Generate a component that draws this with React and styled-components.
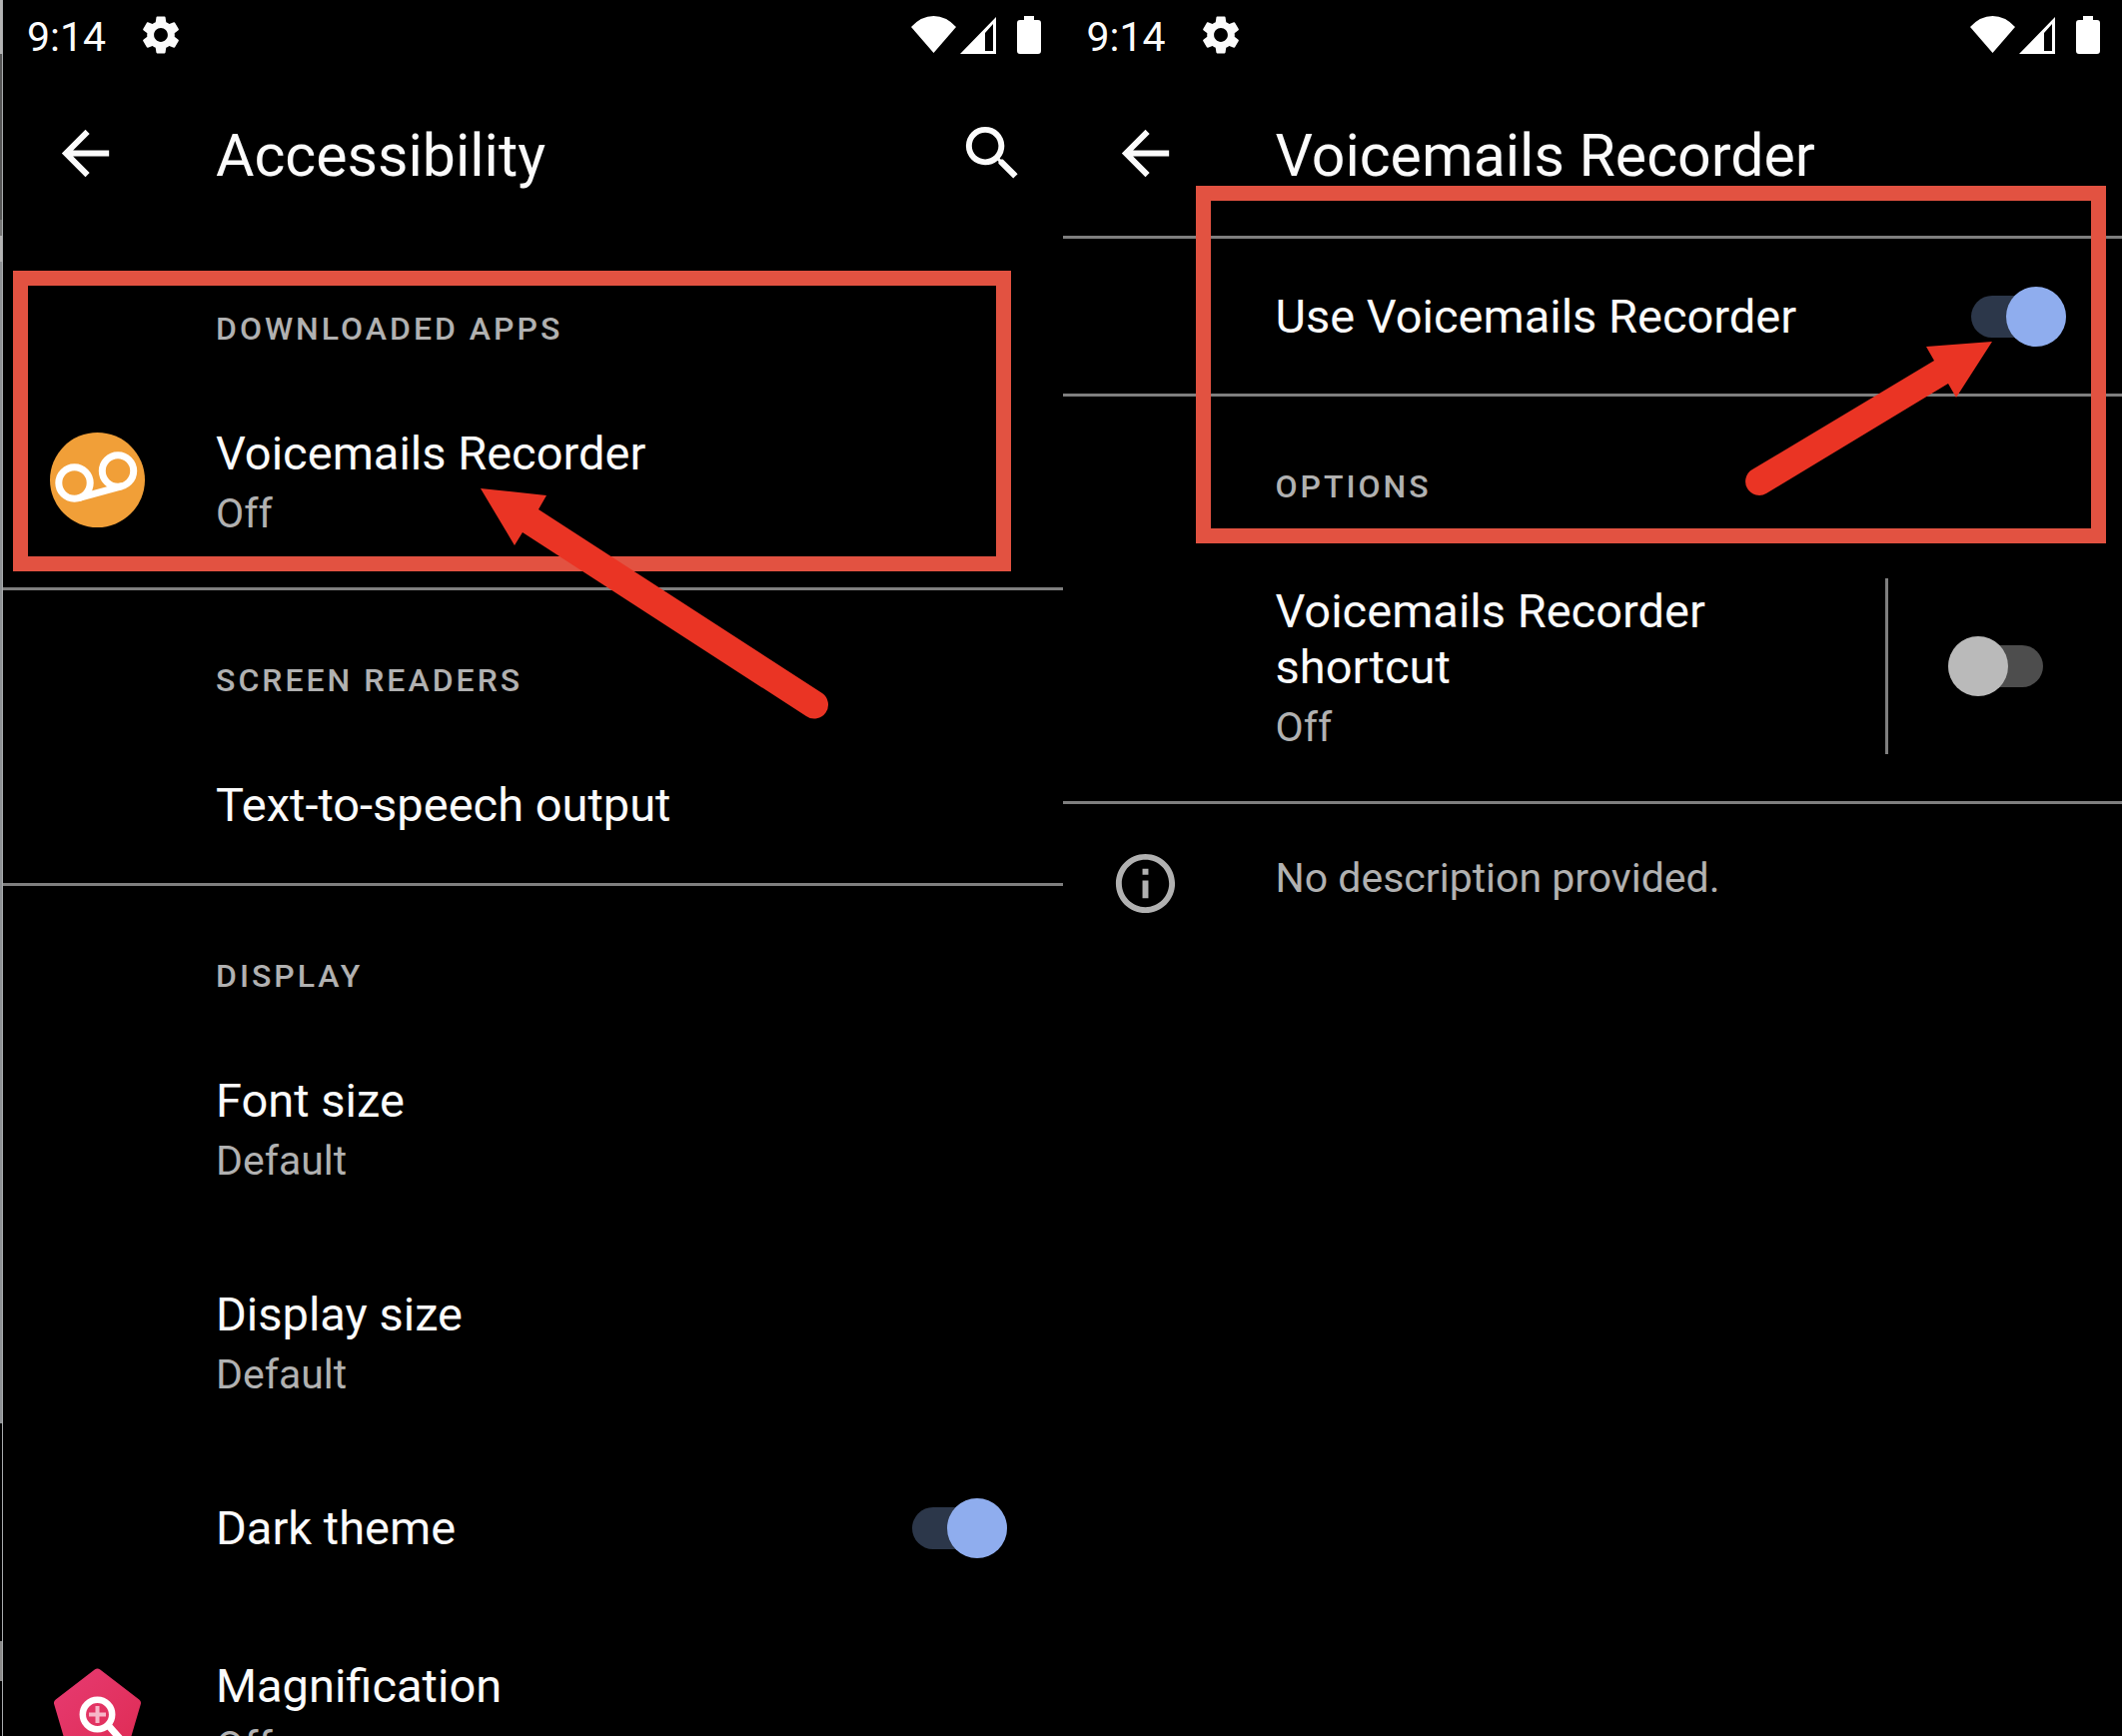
import React from "react";
import styled, { createGlobalStyle, css } from "styled-components";

const color = {
  text: "#fbfbfb",
  muted: "#b1b1b1",
  line: "#7f7f7f",
  frame: "#e25241",
  arrow: "#ea3424",
};

const GlobalStyle = createGlobalStyle`
  * { box-sizing: border-box; }
  body {
    margin: 0;
    background: #000;
    color: ${color.text};
    font-family: Roboto, "Liberation Sans", sans-serif;
  }
`;

/* ---------- layout ---------- */

const Page = styled.main`
  display: grid;
  grid-template-columns: 3px 1fr 1fr;
  height: 100vh;
  overflow: hidden;
`;

const Edge = styled.div`
  border-right: 1px solid #a9acae;
  background: linear-gradient(
    #b4b4b4 0 54px,
    #555 54px 220px,
    #777 220px 236px,
    #b4b4b4 236px 262px,
    #8f9295 262px 1425px,
    #000 1425px 1643px,
    #8a8a8a 1643px 1683px,
    #000 1683px
  );
`;

const Screen = styled.section`
  position: relative;
  display: flex;
  flex-direction: column;
  min-width: 0;
  overflow: hidden;
`;

const StatusBar = styled.div`
  display: flex;
  align-items: center;
  flex: none;
  height: 70px;
  padding: 0 22px 0 24px;
`;

const Clock = styled.time`
  padding-top: 4px;
  margin-right: 32px;
  font-size: 41px;
  line-height: 48px;
`;

const StatusIcons = styled.div`
  display: flex;
  align-items: center;
  margin-left: auto;
`;

const Toolbar = styled.header`
  display: flex;
  align-items: center;
  flex: none;
  height: 166px;
  padding: 0 35px 0 47px;
`;

const Title = styled.h1`
  flex: 1;
  margin: 0;
  padding: 6px 0 0 95px;
  font-size: 59px;
  font-weight: 400;
  line-height: 70px;
`;

const IconButton = styled.button`
  display: flex;
  flex: none;
  padding: 0;
  border: 0;
  background: none;
  color: inherit;
  cursor: pointer;
`;

const Divider = styled.hr`
  flex: none;
  width: 100%;
  height: 3px;
  margin: 0;
  border: 0;
  background: ${(p) => (p.$hidden ? "transparent" : color.line)};
`;

const Category = styled.h2`
  flex: none;
  margin: 0;
  padding: 71px 0 26px 213px;
  color: ${color.muted};
  font-size: 32px;
  font-weight: 500;
  line-height: 38px;
  letter-spacing: 3px;
  text-transform: uppercase;
`;

const rowStyle = css`
  display: flex;
  align-items: center;
  flex: none;
  width: 100%;
  padding: ${(p) => (p.$tight ? "50px 0 49px" : "52px 0 50px")};
  border: 0;
  background: none;
  color: inherit;
  font: inherit;
  text-align: left;
  cursor: pointer;
`;

const RowButton = styled.button`
  ${rowStyle}
`;

const RowLabel = styled.label`
  ${rowStyle}
  padding-right: 56px;
`;

const SplitRow = styled.div`
  display: flex;
  align-items: center;
  flex: none;
`;

const SplitMain = styled.div`
  flex: 1;
  min-width: 0;
`;

const SplitSide = styled.div`
  display: flex;
  align-items: center;
  flex: none;
  height: 176px;
  padding: 0 79px 0 60px;
  border-left: 3px solid ${color.line};
`;

const Lead = styled.span`
  display: flex;
  flex: none;
  width: 213px;
  padding: 0 0 4px 47px;
`;

const Lines = styled.span`
  display: grid;
  flex: 1;
  gap: 8px;
  padding-right: 24px;
`;

const ItemTitle = styled.span`
  font-size: 47px;
  line-height: 56px;
`;

const Summary = styled.span`
  color: ${color.muted};
  font-size: 41px;
  line-height: 48px;
`;

const Footer = styled.footer`
  display: flex;
  align-items: flex-start;
  padding-top: 44px;
  color: ${color.muted};
`;

const FooterText = styled.p`
  margin: 0;
  padding-top: 6px;
  font-size: 41px;
  line-height: 48px;
`;

const Switch = styled.input.attrs({ type: "checkbox", role: "switch" })`
  position: relative;
  flex: none;
  width: 95px;
  height: 60px;
  margin: -2px 0;
  appearance: none;
  cursor: pointer;

  &::before,
  &::after {
    content: "";
    position: absolute;
  }
  &::before {
    inset: 9px 0;
    border-radius: 21px;
    background: #4d4d4d;
  }
  &::after {
    top: 0;
    left: 0;
    width: 60px;
    height: 60px;
    border-radius: 50%;
    background: #bababa;
  }
  &:checked::before {
    background: #2c374a;
  }
  &:checked::after {
    left: 35px;
    background: #8fadee;
  }
`;

/* ---------- annotations drawn over the screens ---------- */

const Frame = styled.div`
  position: absolute;
  top: ${(p) => p.$top}px;
  left: ${(p) => p.$left}px;
  right: ${(p) => p.$right}px;
  height: ${(p) => p.$height}px;
  border: 15px solid ${color.frame};
  pointer-events: none;
`;

const Arrow = styled.svg`
  position: absolute;
  top: ${(p) => p.$top}px;
  ${(p) => (p.$right === undefined ? `left: ${p.$left}px;` : `right: ${p.$right}px;`)}
  fill: ${color.arrow};
  pointer-events: none;
`;

/* ---------- icons ---------- */

const Glyph = ({ d, size = 71 }) => (
  <svg width={size} height={size} viewBox="0 0 24 24" fill="currentColor" aria-hidden="true">
    <path d={d} />
  </svg>
);

const BACK = "M20 11H7.83l5.59-5.59L12 4l-8 8 8 8 1.41-1.41L7.83 13H20v-2z";
const SEARCH =
  "M15.5 14h-.79l-.28-.27A6.471 6.471 0 0 0 16 9.5 6.5 6.5 0 1 0 9.5 16c1.61 0 3.09-.59 4.23-1.57l.27.28v.79l5 4.99L20.49 19l-4.99-5zm-6 0C7.01 14 5 11.99 5 9.5S7.01 5 9.5 5 14 7.01 14 9.5 11.99 14 9.5 14z";
const GEAR =
  "M19.14 12.94c.04-.3.06-.61.06-.94 0-.32-.02-.64-.07-.94l2.03-1.58a.49.49 0 0 0 .12-.61l-1.92-3.32a.488.488 0 0 0-.59-.22l-2.39.96c-.5-.38-1.03-.7-1.62-.94l-.36-2.54a.484.484 0 0 0-.48-.41h-3.84c-.24 0-.43.17-.47.41l-.36 2.54c-.59.24-1.13.57-1.62.94l-2.39-.96c-.22-.08-.47 0-.59.22L2.74 8.87c-.12.21-.08.47.12.61l2.03 1.58c-.05.3-.09.63-.09.94s.02.64.07.94l-2.03 1.58a.49.49 0 0 0-.12.61l1.92 3.32c.12.22.37.29.59.22l2.39-.96c.5.38 1.03.7 1.62.94l.36 2.54c.05.24.24.41.48.41h3.84c.24 0 .44-.17.47-.41l.36-2.54c.59-.24 1.13-.56 1.62-.94l2.39.96c.22.08.47 0 .59-.22l1.92-3.32c.12-.22.07-.47-.12-.61l-2.01-1.58zM12 15.6c-1.98 0-3.6-1.62-3.6-3.6s1.62-3.6 3.6-3.6 3.6 1.62 3.6 3.6-1.62 3.6-3.6 3.6z";
const INFO =
  "M11 7h2v2h-2V7zm0 4h2v6h-2v-6zm1-9C6.48 2 2 6.48 2 12s4.48 10 10 10 10-4.48 10-10S17.52 2 12 2zm0 18c-4.41 0-8-3.59-8-8s3.59-8 8-8 8 3.59 8 8-3.59 8-8 8z";

const SystemIcons = () => (
  <StatusIcons>
    <svg width="45" height="40" viewBox="0 0 45 40" fill="#fff" aria-label="Wi-Fi">
      <path d="M0 12Q10 1 22.500 1T45 12L22.500 38Z" />
    </svg>
    <svg width="61" height="40" viewBox="0 0 61 40" fill="#fff" aria-label="Signal">
      <path fillRule="evenodd" d="M4 39L40 2V39ZM29 36H37V9L29 18Z" />
    </svg>
    <svg width="24" height="40" viewBox="0 0 24 40" fill="#fff" aria-label="Battery">
      <path d="M7 1H17V5H21Q24 5 24 8V36Q24 39 21 39H3Q0 39 0 36V8Q0 5 3 5H7Z" />
    </svg>
  </StatusIcons>
);

const VoicemailIcon = () => (
  <svg width="95" height="95" viewBox="-47.5 -47.5 95 95" aria-hidden="true">
    <circle r="47.500" fill="#f19f38" />
    <g fill="none" stroke="#fff" strokeWidth="7">
      <circle cx="-23" cy="3" r="15.700" />
      <circle cx="20.500" cy="-9" r="15.700" />
      <path d="M-19 18.200L25 6.200" />
    </g>
  </svg>
);

const MagnificationIcon = () => (
  <svg width="95" height="95" viewBox="-47.500 -51.500 95 95" overflow="visible" aria-hidden="true">
    <defs>
      <linearGradient id="mag" x1="0" y1="0" x2="1" y2="1">
        <stop offset="0" stopColor="#e63a70" />
        <stop offset="1" stopColor="#df2c55" />
      </linearGradient>
    </defs>
    <path
      d="M0-43.500L39-13.500L25 34H-25L-39-13.500Z"
      fill="url(#mag)"
      stroke="url(#mag)"
      strokeWidth="9"
      strokeLinejoin="round"
    />
    <circle cy="-2" r="14.700" fill="none" stroke="#fff" strokeWidth="6.500" />
    <path d="M11 9L26 26" stroke="#fff" strokeWidth="7" />
    <path d="M-8.500-2H8.500M0-10.500V6.500" stroke="#f6b6c8" strokeWidth="4" />
  </svg>
);

/* ---------- parts ---------- */

const ScreenTop = ({ title, search }) => (
  <>
    <StatusBar>
      <Clock>9:14</Clock>
      <Glyph d={GEAR} size={46} />
      <SystemIcons />
    </StatusBar>
    <Toolbar>
      <IconButton aria-label="Back">
        <Glyph d={BACK} />
      </IconButton>
      <Title>{title}</Title>
      {search && (
        <IconButton aria-label="Search">
          <Glyph d={SEARCH} />
        </IconButton>
      )}
    </Toolbar>
  </>
);

const ItemText = ({ title, summary }) => (
  <Lines>
    <ItemTitle>{title}</ItemTitle>
    {summary && <Summary>{summary}</Summary>}
  </Lines>
);

const Item = ({ icon, title, summary }) => (
  <RowButton>
    <Lead>{icon}</Lead>
    <ItemText title={title} summary={summary} />
  </RowButton>
);

const SwitchItem = ({ title, tight }) => (
  <RowLabel $tight={tight}>
    <Lead />
    <ItemText title={title} />
    <Switch defaultChecked />
  </RowLabel>
);

export default function App() {
  return (
    <>
      <GlobalStyle />
      <Page>
        <Edge />
        <Screen>
          <ScreenTop title="Accessibility" search />
          <Divider $hidden />
          <Category>Downloaded apps</Category>
          <Item icon={<VoicemailIcon />} title="Voicemails Recorder" summary="Off" />
          <Divider />
          <Category>Screen readers</Category>
          <Item title="Text-to-speech output" />
          <Divider />
          <Category>Display</Category>
          <Item title="Font size" summary="Default" />
          <Item title="Display size" summary="Default" />
          <SwitchItem title="Dark theme" />
          <Item icon={<MagnificationIcon />} title="Magnification" summary="Off" />
          <Frame $top={271} $left={10} $right={52} $height={301} />
          <Arrow $top={486} $left={475} width="356" height="236" viewBox="0 0 356 236" aria-hidden="true">
            <path d="M3 3L69 10L61 24L345 208A13.500 13.500 0 0 1 329 231L45 47L37 60Z" />
          </Arrow>
        </Screen>
        <Screen>
          <ScreenTop title="Voicemails Recorder" />
          <Divider />
          <SwitchItem title="Use Voicemails Recorder" tight />
          <Divider />
          <Category>Options</Category>
          <SplitRow>
            <SplitMain>
              <Item title="Voicemails Recorder shortcut" summary="Off" />
            </SplitMain>
            <SplitSide>
              <Switch aria-label="Voicemails Recorder shortcut" />
            </SplitSide>
          </SplitRow>
          <Divider />
          <Footer>
            <Lead>
              <Glyph d={INFO} />
            </Lead>
            <FooterText>No description provided.</FooterText>
          </Footer>
          <Frame $top={186} $left={133} $right={16} $height={358} />
          <Arrow $top={339} $right={126} width="254" height="160" viewBox="0 0 254 160" aria-hidden="true">
            <path d="M250 3L184 8L192 22L10 131A13.500 13.500 0 0 0 24 155L206 45L214 59Z" />
          </Arrow>
        </Screen>
      </Page>
    </>
  );
}
